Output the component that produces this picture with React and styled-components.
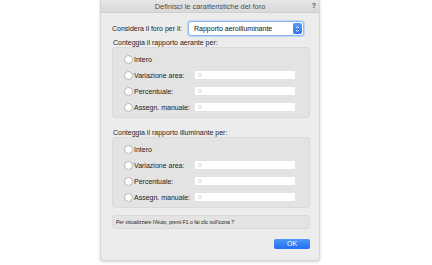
import React from "react";
import styled, { createGlobalStyle } from "styled-components";

const GlobalStyle = createGlobalStyle`
  html, body {
    margin: 0;
    padding: 0;
    background: #ffffff;
  }
  body {
    font-family: "Liberation Sans", Arial, sans-serif;
  }
`;

const Page = styled.div`
  width: 432px;
  height: 265px;
  padding-left: 100px;
  box-sizing: border-box;
  overflow: hidden;
`;

const Window = styled.div`
  position: relative;
  width: 220px;
  height: 261px;
  box-sizing: border-box;
  background: #ececec;
  border: 1px solid #d6d6d6;
  border-top: none;
  border-radius: 0 0 4px 4px;
  box-shadow: 0 1px 3px rgba(0, 0, 0, 0.18);
  display: flex;
  flex-direction: column;
`;

const TitleBar = styled.div`
  position: relative;
  height: 12px;
  background: linear-gradient(#e6e6e6, #d9d9d9);
  border-bottom: 1px solid #cfcfcf;
  display: flex;
  align-items: center;
  justify-content: center;
  font-size: 7.4px;
  color: #4d4d4d;
`;

const HelpGlyph = styled.span`
  position: absolute;
  right: 3px;
  top: 2px;
  font-size: 7px;
  font-weight: bold;
  color: #555;
`;

const Content = styled.div`
  display: flex;
  flex-direction: column;
  padding: 8px 10px 0 11px;
  flex: 1;
`;

const TopRow = styled.div`
  display: flex;
  align-items: center;
  height: 15px;
`;

const Label = styled.span`
  font-size: 7px;
  color: #1b1b1b;
  white-space: nowrap;
  width: ${({ $w }) => ($w ? `${$w}px` : "auto")};
  flex-shrink: 0;
`;

const Select = styled.div`
  width: 116px;
  height: 15px;
  box-sizing: border-box;
  background: #fff;
  border: 1px solid #8fb9f2;
  border-radius: 3px;
  box-shadow: 0 0 0 1px #bcd6f8;
  display: flex;
  align-items: center;
  justify-content: space-between;
  padding-left: 5px;
  font-size: 7px;
  color: #111;
`;

const Stepper = styled.div`
  width: 9px;
  height: 11px;
  margin-right: 1px;
  border-radius: 2px;
  background: linear-gradient(#5a9cf8, #2b74ee);
  display: flex;
  align-items: center;
  justify-content: center;
`;

const GroupTitle = styled.div`
  font-size: 7px;
  color: #1b1b1b;
  line-height: 8px;
  padding-left: 1px;
  margin-top: ${({ $top }) => $top}px;
`;

const Group = styled.div`
  width: 198px;
  box-sizing: border-box;
  background: #e3e3e3;
  border: 1px solid #dadada;
  border-radius: 3px;
  padding: 3px 0 2px 11px;
  display: flex;
  flex-direction: column;
`;

const OptionRow = styled.div`
  display: flex;
  align-items: center;
  height: 16px;
`;

const Radio = styled.span`
  width: 9px;
  height: 9px;
  box-sizing: border-box;
  border-radius: 50%;
  background: #fff;
  border: 1px solid #b5b5b5;
  margin-right: 1px;
  flex-shrink: 0;
`;

const Field = styled.div`
  width: 102px;
  height: 10px;
  box-sizing: border-box;
  background: #fff;
  border: 1px solid #e2e2e2;
  font-size: 6px;
  color: #bcbcbc;
  padding-left: 3px;
  display: flex;
  align-items: center;
`;

const HelpBox = styled.div`
  margin-top: 7px;
  width: 198px;
  height: 14px;
  box-sizing: border-box;
  background: #e3e3e3;
  border: 1px solid #dadada;
  border-radius: 3px;
  padding-left: 3px;
  display: flex;
  align-items: center;
  font-size: 5px;
  color: #222;
  white-space: nowrap;
`;

const Footer = styled.div`
  display: flex;
  justify-content: flex-end;
  width: 198px;
  margin-top: 10px;
`;

const OkButton = styled.button`
  width: 36px;
  height: 10px;
  padding: 0;
  border: none;
  border-radius: 2px;
  background: linear-gradient(#4f97f8, #1f6ef0);
  color: #fff;
  font-family: "Liberation Sans", Arial, sans-serif;
  font-size: 7px;
  line-height: 10px;
`;

const options = [
  { label: "Intero", field: false },
  { label: "Variazione area:", field: true },
  { label: "Percentuale:", field: true },
  { label: "Assegn. manuale:", field: true },
];

const OptionGroup = () => (
  <Group>
    {options.map((o) => (
      <OptionRow key={o.label}>
        <Radio />
        <Label $w={o.field ? 60 : 0}>{o.label}</Label>
        {o.field && <Field>0</Field>}
      </OptionRow>
    ))}
  </Group>
);

const App = () => (
  <Page>
    <GlobalStyle />
    <Window>
      <TitleBar>
        Definisci le caratteristiche del foro
        <HelpGlyph>?</HelpGlyph>
      </TitleBar>
      <Content>
        <TopRow>
          <Label $w={76}>Considera il foro per il:</Label>
          <Select>
            Rapporto aeroilluminante
            <Stepper>
              <svg width="5" height="8" viewBox="0 0 5 8">
                <path d="M1 3 L2.5 1.5 L4 3 M1 5 L2.5 6.5 L4 5" stroke="#fff" strokeWidth="0.9" fill="none" />
              </svg>
            </Stepper>
          </Select>
        </TopRow>
        <GroupTitle $top={3}>Conteggia il rapporto aerante per:</GroupTitle>
        <OptionGroup />
        <GroupTitle $top={11}>Conteggia il rapporto illuminante per:</GroupTitle>
        <OptionGroup />
        <HelpBox>Per visualizzare l'Aiuto, premi F1 o fai clic sull'icona ?</HelpBox>
        <Footer>
          <OkButton>OK</OkButton>
        </Footer>
      </Content>
    </Window>
  </Page>
);

export default App;
